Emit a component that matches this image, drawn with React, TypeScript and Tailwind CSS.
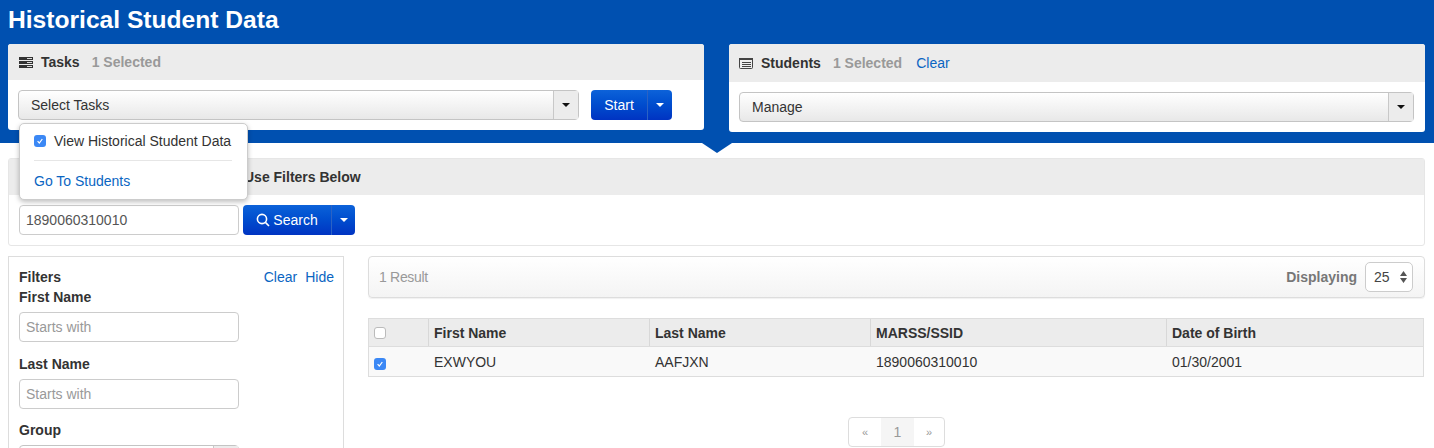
import React from 'react';

const Caret = ({ color }: { color: string }) => (
  <svg width="8" height="4" viewBox="0 0 8 4" className="block">
    <path d="M0 0h8L4 4z" fill={color} />
  </svg>
);

const Check = () => (
  <span className="flex h-3 w-3 items-center justify-center rounded-[3px] bg-[#3b88f5]">
    <svg width="8" height="8" viewBox="0 0 8 8" fill="none">
      <path d="M1.6 4.2 3.3 6l3-4" stroke="#fff" strokeWidth="1.2" />
    </svg>
  </span>
);

const TasksIcon = () => (
  <svg width="14" height="11" viewBox="0 0 14 11" className="block">
    <path d="M0 0h14v3H0zM0 4h14v3H0zM0 8h14v3H0z" fill="#333" />
    <path d="M8 1h5v1H8zM8 5h5v1H8zM8 9h5v1H8z" fill="#ddd" />
  </svg>
);

const StudentsIcon = () => (
  <svg width="14" height="11" viewBox="0 0 14 11" className="block">
    <rect x="0.5" y="0.5" width="13" height="10" rx="1" fill="#eee" stroke="#444" />
    <path d="M0 0h14v2H0zM3 4h9v1H3zM3 6h9v1H3zM3 8h9v1H3z" fill="#444" />
  </svg>
);

const SearchIcon = () => (
  <svg width="14" height="14" viewBox="0 0 14 14" fill="none" stroke="#fff" strokeWidth="1.6" className="block">
    <circle cx="6" cy="6" r="4.6" />
    <path d="m9.4 9.4 3.600 3.600" />
  </svg>
);

const SelectBox = ({ label, className }: { label: string; className: string }) => (
  <div className={`flex h-[30px] rounded-[4px] border border-[#c4c4c4] bg-gradient-to-b from-white to-[#e8e8e8] text-[14px] text-[#333] ${className}`}>
    <div className="flex flex-1 items-center pl-3">{label}</div>
    <div className="flex w-[25px] items-center justify-center border-l border-[#c8c8c8] bg-[#ececec]">
      <Caret color="#111" />
    </div>
  </div>
);

const BlueSplit = ({ children, width, caretWidth }: { children: React.ReactNode; width: string; caretWidth: string }) => (
  <div className="flex h-[30px] overflow-hidden rounded-[4px] bg-gradient-to-b from-[#0d62d9] to-[#0033c2] text-[14px] text-white">
    <div className={`flex items-center justify-center gap-[3px] ${width}`}>{children}</div>
    <div className={`flex items-center justify-center border-l border-[#2b62c4] ${caretWidth}`}>
      <Caret color="#fff" />
    </div>
  </div>
);

const FilterField = ({ label }: { label: string }) => (
  <div>
    <div className="text-[14px] font-bold leading-[20px] text-[#333]">{label}</div>
    <div className="mt-[5px] flex h-[30px] w-[220px] items-center rounded-[4px] border border-[#ccc] bg-white pl-[6px] text-[14px] text-[#999]">
      Starts with
    </div>
  </div>
);

const headers = [
  { label: 'First Name', width: 'w-[221px]' },
  { label: 'Last Name', width: 'w-[221px]' },
  { label: 'MARSS/SSID', width: 'w-[296px]' },
  { label: 'Date of Birth', width: 'flex-1' },
];

const cells = [
  { label: 'EXWYOU', width: 'w-[221px]' },
  { label: 'AAFJXN', width: 'w-[221px]' },
  { label: '1890060310010', width: 'w-[296px]' },
  { label: '01/30/2001', width: 'flex-1' },
];

const App: React.FC = () => {
  return (
    <div className="relative h-[448px] overflow-hidden bg-white font-['Liberation_Sans',Arial,sans-serif] text-[14px] text-[#333]">
      {/* Blue header with the two selection panels */}
      <div className="relative h-[143px] bg-[#0050b0] px-2">
        <h1 className="h-[44px] pt-[5px] text-[24.6px] font-bold leading-[30px] text-white">Historical Student Data</h1>
        <div className="flex items-start justify-between pr-[1px]">
          <div className="h-[86px] w-[696px] overflow-hidden rounded-[3px] bg-white">
            <div className="flex h-9 items-center bg-[#ececec] pl-[11px] font-bold">
              <TasksIcon />
              <span className="ml-2">Tasks</span>
              <span className="ml-3 text-[#999]">1 Selected</span>
            </div>
            <div className="flex items-center pl-[10px] pt-[10px]">
              <SelectBox label="Select Tasks" className="w-[561px]" />
              <div className="ml-3">
                <BlueSplit width="w-14" caretWidth="w-[25px]">Start</BlueSplit>
              </div>
            </div>
          </div>
          <div className="h-[88px] w-[696px] overflow-hidden rounded-[3px] bg-white">
            <div className="flex h-[38px] items-center bg-[#ececec] pl-[10px] font-bold">
              <StudentsIcon />
              <span className="ml-2">Students</span>
              <span className="ml-3 text-[#999]">1 Selected</span>
              <span className="ml-[14px] font-normal text-[#0a65c2]">Clear</span>
            </div>
            <div className="pl-[10px] pr-[11px] pt-[10px]">
              <SelectBox label="Manage" className="w-full" />
            </div>
          </div>
        </div>
        <svg width="30" height="10" viewBox="0 0 30 10" className="absolute left-[702px] top-[143px]">
          <path d="M0 0h30L15 10z" fill="#0050b0" />
        </svg>
      </div>

      {/* Search panel: the start of the heading is covered by the popover in the reference */}
      <div className="ml-2 mr-[9px] mt-[15px] h-[88px] rounded-[3px] border border-[#e6e6e6] bg-white">
        <div className="flex h-9 items-center whitespace-nowrap bg-[#ececec] pl-[235px] font-bold">
          Use Filters Below
        </div>
        <div className="flex gap-1 pl-[10px] pt-[10px]">
          <div className="flex h-[30px] w-[220px] items-center rounded-[4px] border border-[#ccc] pl-[6px] text-[14px] text-[#555]">
            1890060310010
          </div>
          <BlueSplit width="w-[88px]" caretWidth="w-6">
            <SearchIcon />
            Search
          </BlueSplit>
        </div>
      </div>

      <div className="mt-[10px] flex items-start pl-2 pr-[9px]">
        {/* Filters */}
        <div className="h-[260px] w-[336px] border border-[#ddd] pl-[10px] pr-[9px] pt-[10px]">
          <div className="flex justify-between leading-[20px]">
            <span className="font-bold">Filters</span>
            <span className="flex gap-2 text-[#0a65c2]">
              <span>Clear</span>
              <span>Hide</span>
            </span>
          </div>
          <div className="flex flex-col">
            <FilterField label="First Name" />
            <div className="mt-3">
              <FilterField label="Last Name" />
            </div>
            <div className="mt-[11px]">
              <div className="text-[14px] font-bold leading-[20px]">Group</div>
              <div className="mt-[5px]">
                <SelectBox label="" className="w-[220px]" />
              </div>
            </div>
          </div>
        </div>

        {/* Results */}
        <div className="ml-6 flex-1">
          <div className="flex h-[42px] items-center justify-between rounded-[4px] border border-[#ddd] bg-gradient-to-b from-white to-[#f4f4f4] pl-[10px] pr-[11px] shadow-[0_1px_1px_rgba(0,0,0,0.06)]">
            <span className="tracking-[-0.3px] text-[#999]">1 Result</span>
            <div className="flex items-center gap-2">
              <span className="font-bold text-[#777]">Displaying</span>
              <div className="flex h-[30px] w-[48px] items-center justify-between rounded-[5px] border border-[#ccc] bg-white pl-2 pr-[5px] text-[#444]">
                25
                <svg width="7" height="12" viewBox="0 0 7 12" className="block">
                  <path d="M3.5 0 7 5H0zM0 7h7l-3.500 5z" fill="#555" />
                </svg>
              </div>
            </div>
          </div>

          <div className="mr-[1px] mt-5 border border-[#ddd] text-[14px]">
            <div className="flex h-[28px] border-b border-[#ddd] bg-[#ececec] font-bold">
              <div className="flex w-[60px] items-center border-r border-[#d8d8d8] pl-[5px]">
                <span className="h-3 w-3 rounded-[3px] border border-[#bbb] bg-white" />
              </div>
              {headers.map((h, i) => (
                <div key={h.label} className={`flex items-center pl-[5px] pt-[2px] ${h.width} ${i < 3 ? 'border-r border-[#d8d8d8]' : ''}`}>
                  {h.label}
                </div>
              ))}
            </div>
            <div className="flex h-[29px] bg-[#f9f9f9]">
              <div className="flex w-[60px] items-center pl-[5px] pt-[5px]">
                <Check />
              </div>
              {cells.map((c) => (
                <div key={c.label} className={`flex items-center pl-[5px] pt-[2px] ${c.width}`}>
                  {c.label}
                </div>
              ))}
            </div>
          </div>

          <div className="mt-10 flex justify-center">
            <div className="flex h-[30px] items-center overflow-hidden rounded-[4px] border border-[#ddd] text-[#999]">
              <span className="flex h-full w-8 items-center justify-center text-[11px]">«</span>
              <span className="flex h-full w-[33px] items-center justify-center bg-[#f5f5f5] text-[14px]">1</span>
              <span className="flex h-full w-[30px] items-center justify-center text-[11px]">»</span>
            </div>
          </div>
        </div>
      </div>

      {/* Tasks popover */}
      <div className="absolute left-[19px] top-[123px] h-[77px] w-[229px] rounded-[5px] border border-[#ccc] bg-white pl-[14px] pr-[15px] pt-[7px] shadow-[0_2px_5px_rgba(0,0,0,0.25)]">
        <div className="flex items-center gap-2 leading-[20px] text-[#333]">
          <Check />
          <span className="whitespace-nowrap">View Historical Student Data</span>
        </div>
        <div className="mt-[9px] border-t border-[#e6e6e6]" />
        <div className="mt-[10px] leading-[20px] text-[#0a65c2]">Go To Students</div>
      </div>
    </div>
  );
};

export default App;
